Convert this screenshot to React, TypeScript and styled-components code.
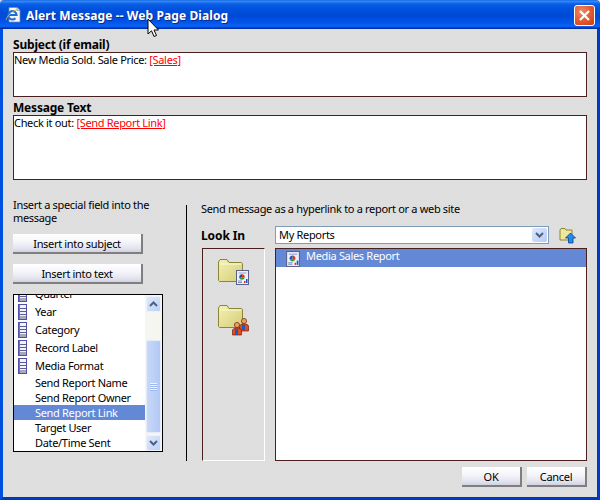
import React from "react";
import styled, { createGlobalStyle, css } from "styled-components";

const Global = createGlobalStyle`
  html, body { margin: 0; padding: 0; background: #dfdfdf; }
  #root { width: 600px; height: 500px; }
`;

const FONT = `"Noto Sans", "DejaVu Sans", sans-serif`;
const MAROON = "#4a1f1f";

const Win = styled.div`
  position: relative; width: 600px; height: 500px; overflow: hidden;
  display: flex; flex-direction: column;
  font: 11px/14px ${FONT}; letter-spacing: -0.32px; color: #000;
  background: repeating-conic-gradient(#e1e1e1 0 25%, #dcdcdc 0 50%) 0 0 / 2px 2px;
`;
const TitleBar = styled.div`
  height: 29px; box-sizing: border-box; flex: none;
  display: flex; align-items: center; padding: 0 5px 0 5px; gap: 5px;
  border-radius: 4px 4px 0 0;
  background: linear-gradient(180deg, #0a5ce0 0, #3a8cf4 1px, #2a7ff0 2px, #0a5ee6 4px, #0052dc 9px, #0048d8 16px, #0055e8 22px, #0a62f6 26px, #0558ea 27px, #0030a8 28px, #0030a8 29px);
`;
const TitleText = styled.div`
  flex: 1; color: #fff; font: bold 12px/16px ${FONT}; padding-top: 2px;
  text-shadow: 1px 1px 0 #0a2a8c; white-space: nowrap; letter-spacing: 0.1px;
`;
const CloseBtn = styled.div`
  width: 21px; height: 21px; box-sizing: border-box; margin-top: 1px;
  border: 1px solid #fff; border-radius: 3px;
  background: radial-gradient(circle at 35% 30%, #ef8a68, #e2582c 55%, #cc3a10);
  display: flex; align-items: center; justify-content: center;
`;
const Body = styled.div`
  flex: 1; min-height: 0; box-sizing: border-box;
  border: 3px solid #0050e0; border-top: 0; border-bottom-color: #0038c0;
  border-right-color: #0038c8;
  padding: 0 10px 10px;
  display: flex; flex-direction: column;
`;
const FieldLabel = styled.div<{ $h: number }>`
  height: ${p => p.$h}px; box-sizing: border-box; font-weight: bold; font-size: 12px; line-height: 14px;
  letter-spacing: -0.2px; display: flex; align-items: flex-end;
`;
const TextBox = styled.div<{ $h: number }>`
  height: ${p => p.$h}px; box-sizing: border-box; background: #fff;
  border: 1px solid ${MAROON}; line-height: 14px;
`;
const Token = styled.span`
  color: #f00; text-decoration: underline;
`;
const Lower = styled.div`
  display: flex; flex: 1; min-height: 0; padding-top: 18px;
`;
const LeftCol = styled.div`
  width: 173px; flex: none; box-sizing: border-box; display: flex; flex-direction: column;
`;
const Hint = styled.div`
  height: 36px; width: 160px; line-height: 13px;
`;
const btn = css`
  box-sizing: border-box; height: 20px; display: flex; align-items: center; justify-content: center;
  padding-top: 2px;
  background: linear-gradient(180deg, #fff 0, #f4f5f9 45%, #e2e3ee 80%, #d0d2e2 100%);
  border-right: 2px solid #7f7f7f; border-bottom: 2px solid #7f7f7f; font-size: 11px; color: #000;
`;
const InsertBtn = styled.div`
  ${btn}; width: 130px; margin-bottom: 10px;
`;
const List = styled.div`
  width: 150px; height: 158px; box-sizing: border-box; border: 1px solid #000; background: #fff;
  display: flex; overflow: hidden;
`;
const ListItems = styled.div`
  flex: 1; min-width: 0; overflow: hidden;
`;
const ListInner = styled.div`
  margin-top: -10px;
`;
const Row = styled.div<{ $icon?: boolean; $sel?: boolean }>`
  height: ${p => (p.$icon ? 18 : 15)}px; display: flex; align-items: center;
  padding-left: ${p => (p.$icon ? 4 : 21)}px; white-space: nowrap;
  background: ${p => (p.$sel ? "#6388d6" : "transparent")};
  color: ${p => (p.$sel ? "#fff" : "#000")};
  & > svg { margin-right: 8px; flex: none; }
`;
const ScrollBar = styled.div`
  width: 17px; flex: none; background: #f6f6f0; display: flex; flex-direction: column; box-sizing: border-box; padding: 0 1px;
`;
const ScrollBtn = styled.div`
  width: 15px; height: 16px; margin-top: 1px; flex: none; border-radius: 2px; box-sizing: border-box;
  background: linear-gradient(135deg, #e0e9fb, #bcd0f6); border: 1px solid #ecf2fc;
  display: flex; align-items: center; justify-content: center;
`;
const ScrollGap = styled.div`
  height: 28px; flex: none;
`;
const Thumb = styled.div`
  flex: 1; width: 15px; margin-bottom: 1px; box-sizing: border-box; border-radius: 2px;
  background: linear-gradient(90deg, #c8d8f8, #b2c8f4); border: 1px solid #e4ecfb;
  display: flex; align-items: center; justify-content: center;
`;
const Grip = styled.div`
  width: 7px; height: 8px;
  background: repeating-linear-gradient(180deg, #eef3fd 0 1px, #9db8ec 1px 2px);
`;
const Divider = styled.div`
  width: 1px; flex: none; background: #000; margin: 7px 0 0 0; height: 256px;
`;
const RightCol = styled.div`
  flex: 1; min-width: 0; padding: 4px 0 0 14px; display: flex; flex-direction: column;
`;
const SendText = styled.div`
  height: 17px; line-height: 14px;
`;
const LookRow = styled.div`
  display: flex; align-items: center; height: 18px; margin-top: 7px;
`;
const LookLabel = styled.div`
  width: 74px; flex: none; font-weight: bold; font-size: 12px; letter-spacing: -0.1px; padding-top: 1px;
`;
const Combo = styled.div`
  width: 274px; height: 18px; flex: none; box-sizing: border-box; background: #fff;
  border: 1px solid #7f9db9; display: flex; align-items: center; padding-left: 3px;
`;
const ComboText = styled.div`flex: 1;`;
const ComboBtn = styled.div`
  width: 15px; height: 14px; margin-right: 1px; border-radius: 2px;
  background: linear-gradient(135deg, #dfe8fb, #b6cbf5); display: flex; align-items: center; justify-content: center;
`;
const UpIcon = styled.div`
  margin-left: 10px; display: flex;
`;
const Panes = styled.div`
  display: flex; margin-top: 4px; height: 213px;
`;
const Places = styled.div`
  width: 63px; flex: none; box-sizing: border-box; margin-left: 1px;
  border-left: 1px solid ${MAROON}; border-top: 1px solid ${MAROON}; border-right: 1px solid #fff; border-bottom: 1px solid #fff;
  display: flex; flex-direction: column; align-items: center; gap: 14px; padding-top: 9px;
`;
const ReportList = styled.div`
  width: 312px; margin-left: 10px; box-sizing: border-box; background: #fff; border: 1px solid ${MAROON};
`;
const ReportRow = styled.div`
  height: 18px; background: #6388d6; color: #fff; display: flex; align-items: flex-start; padding-left: 10px; gap: 6px; line-height: 13px; box-sizing: border-box;
  & > svg { margin-top: 2px; flex: none; }
`;
const Footer = styled.div`
  display: flex; justify-content: flex-end; gap: 5px; margin-top: 6px;
`;
const ActionBtn = styled.div`
  ${btn}; width: 60px;
`;
const Cursor = styled.svg`
  position: absolute; left: 147px; top: 18px;
`;

const DbIcon = () => (
  <svg width="9" height="16" viewBox="0 0 9 16" shapeRendering="crispEdges">
    <rect x="0.5" y="0.5" width="8" height="15" fill="#f2f2f8" stroke="#5050a8" />
    <path d="M1.5 1v14" stroke="#7070c8" />
    <path d="M2 4h6M2 7h6M2 10h6" stroke="#5c5c90" />
    <rect x="2" y="12" width="6" height="3" fill="#a8a8b8" />
  </svg>
);

const ReportGlyph = ({ x = 0, y = 0 }: { x?: number; y?: number }) => (
  <g transform={`translate(${x} ${y})`}>
    <rect x="0.5" y="0.5" width="12" height="14" fill="#eef0f8" stroke="#5a6088" />
    <path d="M2.5 3h8" stroke="#8fa0d0" />
    <path d="M6 7 V4.2 A2.8 2.8 0 0 1 8.6 8Z" fill="#e03020" />
    <path d="M6 7 V4.2 A2.8 2.8 0 0 0 3.6 8.4Z" fill="#2050c0" />
    <path d="M6 7 L3.6 8.4 A2.8 2.8 0 0 0 8.6 8Z" fill="#30a030" />
    <rect x="8" y="11" width="1.5" height="2" fill="#d03020" />
    <rect x="10" y="9" width="1.5" height="4" fill="#2050c0" />
    <path d="M2 11h4M2 12.5h4" stroke="#8090c0" />
  </g>
);

const Folder = ({ children }: { children?: React.ReactNode }) => (
  <svg width="32" height="32" viewBox="0 0 32 32">
    <defs>
      <linearGradient id="fg" x1="0" y1="0" x2="1" y2="1">
        <stop offset="0" stopColor="#f4f2b4" /><stop offset="1" stopColor="#d4cc78" />
      </linearGradient>
    </defs>
    <path d="M0.5 4 L2 1.5 H9 L11 4.5 H23.5 L24.5 5.5 V23.5 H1.5 L0.5 22.5Z" fill="url(#fg)" stroke="#8c8436" />
    <path d="M2 6 H23" stroke="#fbfadc" />
    {children}
  </svg>
);

const People = () => (
  <g>
    <circle cx="26" cy="17" r="2.6" fill="#e8a060" stroke="#702010" strokeWidth="0.7" />
    <path d="M21.5 27 V22 Q22 20 26 20 Q30.5 20 30.5 22 V27Z" fill="#e84820" stroke="#702010" strokeWidth="0.7" />
    <rect x="24" y="21" width="3" height="5" fill="#1060c0" />
    <circle cx="19" cy="21" r="2.6" fill="#e8a060" stroke="#702010" strokeWidth="0.7" />
    <path d="M14.5 31 V26 Q15 24 19 24 Q23.5 24 23.5 26 V31Z" fill="#e84820" stroke="#702010" strokeWidth="0.7" />
    <rect x="17" y="25" width="3" height="6" fill="#1060c0" />
  </g>
);

const Chevron = ({ up, color = "#4d6185" }: { up?: boolean; color?: string }) => (
  <svg width="9" height="6" viewBox="0 0 9 6">
    <path d={up ? "M1 5 L4.5 1.5 L8 5" : "M1 1 L4.5 4.5 L8 1"} fill="none" stroke={color} strokeWidth="2" />
  </svg>
);

const fields = ["Quarter", "Year", "Category", "Record Label", "Media Format"];
const plain = ["Send Report Name", "Send Report Owner", "Send Report Link", "Target User", "Date/Time Sent"];

export default function App() {
  return (
    <Win>
      <Global />
      <TitleBar>
        <svg width="16" height="17" viewBox="0 0 16 17">
          <path d="M4 1.5 H12 L15 4.5 V16 H4Z" fill="#f6f6f6" stroke="#7c8aa0" strokeWidth="0.7" />
          <path d="M12 1.5 V4.5 H15" fill="#d8dce4" stroke="#7c8aa0" strokeWidth="0.6" />
          <path d="M3.6 9 H11.6 A4.2 4.2 0 1 0 10.4 12.2" fill="none" stroke="#1e6fd0" strokeWidth="2.1" />
          <path d="M1 14 C2 10 8 4 13 3.5" fill="none" stroke="#e8b030" strokeWidth="0.9" />
        </svg>
        <TitleText>Alert Message -- Web Page Dialog</TitleText>
        <CloseBtn>
          <svg width="11" height="11" viewBox="0 0 11 11">
            <path d="M1 1 L10 10 M10 1 L1 10" stroke="#fff" strokeWidth="2.2" />
          </svg>
        </CloseBtn>
      </TitleBar>
      <Body>
        <FieldLabel $h={23}>Subject (if email)</FieldLabel>
        <TextBox $h={45}>New Media Sold. Sale Price: <Token>[Sales]</Token></TextBox>
        <FieldLabel $h={18}>Message Text</FieldLabel>
        <TextBox $h={65}>Check it out: <Token>[Send Report Link]</Token></TextBox>
        <Lower>
          <LeftCol>
            <Hint>Insert a special field into the message</Hint>
            <InsertBtn>Insert into subject</InsertBtn>
            <InsertBtn>Insert into text</InsertBtn>
            <List>
              <ListItems>
                <ListInner>
                  {fields.map(f => <Row key={f} $icon><DbIcon />{f}</Row>)}
                  {plain.map(f => <Row key={f} $sel={f === "Send Report Link"}>{f}</Row>)}
                </ListInner>
              </ListItems>
              <ScrollBar>
                <ScrollBtn><Chevron up /></ScrollBtn>
                <ScrollGap />
                <Thumb><Grip /></Thumb>
                <ScrollBtn><Chevron /></ScrollBtn>
              </ScrollBar>
            </List>
          </LeftCol>
          <Divider />
          <RightCol>
            <SendText>Send message as a hyperlink to a report or a web site</SendText>
            <LookRow>
              <LookLabel>Look In</LookLabel>
              <Combo>
                <ComboText>My Reports</ComboText>
                <ComboBtn><Chevron /></ComboBtn>
              </Combo>
              <UpIcon>
                <svg width="17" height="17" viewBox="0 0 17 17">
                  <path d="M1 3 L2 1.5 H6 L7 3 H13 V13 H1Z" fill="#eee89c" stroke="#8c8436" />
                  <path d="M11.5 6 L16.5 11 H14 V16 H9.5 V11 H6.5Z" fill="#1e8cf0" stroke="#0a3c90" strokeWidth="0.8" />
                </svg>
              </UpIcon>
            </LookRow>
            <Panes>
              <Places>
                <Folder><ReportGlyph x={18} y={12} /></Folder>
                <Folder><People /></Folder>
              </Places>
              <ReportList>
                <ReportRow>
                  <svg width="14" height="16" viewBox="0 0 13 15"><ReportGlyph /></svg>
                  Media Sales Report
                </ReportRow>
              </ReportList>
            </Panes>
          </RightCol>
        </Lower>
        <Footer>
          <ActionBtn>OK</ActionBtn>
          <ActionBtn>Cancel</ActionBtn>
        </Footer>
      </Body>
      <Cursor width="14" height="21" viewBox="0 0 14 21">
        <path d="M1 1 V16 L4.5 12.8 L7 18.5 L9.5 17.5 L7 12 H11.5Z" fill="#fff" stroke="#000" strokeWidth="1" />
      </Cursor>
    </Win>
  );
}
